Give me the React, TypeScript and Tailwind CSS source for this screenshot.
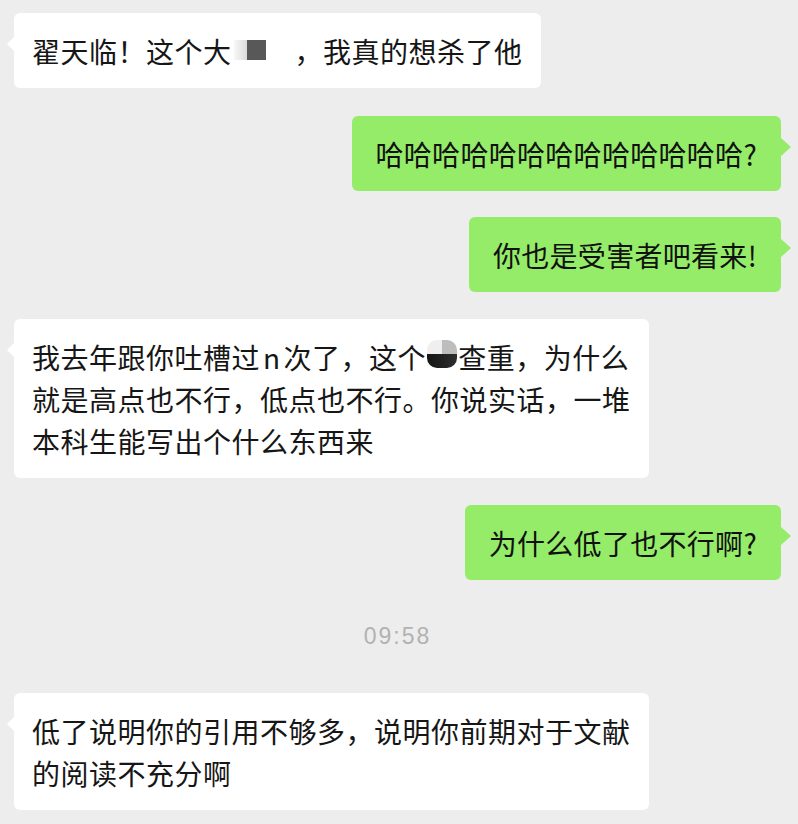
import React from "react";

function LeftBubble({ children }: { children: React.ReactNode }) {
  return (
    <div className="flex justify-start">
      <div className="relative max-w-[660px] rounded-[6px] bg-white px-[18px] py-[16.5px]">
        {/* tail */}
        <span className="absolute -left-[7px] top-[24px] h-0 w-0 border-y-[7px] border-r-[7px] border-y-transparent border-r-white" />
        <p className="text-[28px] leading-[42px] tracking-[0.5px] text-[#161616]">{children}</p>
      </div>
    </div>
  );
}

function RightBubble({ children }: { children: React.ReactNode }) {
  return (
    <div className="flex justify-end">
      <div className="relative max-w-[660px] rounded-[6px] bg-[#95ec69] px-[24px] py-[16.5px]">
        <span className="absolute -right-[10px] top-[22px] h-0 w-0 border-y-[9px] border-l-[10px] border-y-transparent border-l-[#95ec69]" />
        <p className="text-[28px] leading-[42px] tracking-[0.3px] text-[#111]">{children}</p>
      </div>
    </div>
  );
}

// mosaic blocks covering the original words
function BlurName() {
  return (
    <span className="inline-block h-[20px] w-[63px] overflow-hidden align-[3px]">
      <span className="flex h-[20px]">
        <span className="ml-[2px] h-[20px] w-[13px] bg-gradient-to-r from-[#f8f8f8] to-[#dadada]" />
        <span className="h-[20px] w-[19px] bg-[#585858]" />
      </span>
    </span>
  );
}

function BlurBlob() {
  return (
    <span className="mx-[1px] inline-block h-[28px] w-[30px] overflow-hidden rounded-[10px] align-[1px]">
      <span className="flex h-[14px]">
        <span className="w-[15px] bg-[#efefef]" />
        <span className="w-[15px] bg-[#bdbdbd]" />
      </span>
      <span className="block h-[14px] bg-gradient-to-r from-[#151515] to-[#2e2e2e]" />
    </span>
  );
}

export default function App() {
  return (
    <div
      className="min-h-[824px] w-full bg-[#ededed] pl-[14px] pr-[17px] pt-[13px] pb-[14px]"
      style={{ fontFamily: '"Noto Sans CJK SC", "Noto Sans", sans-serif' }}
    >
      <LeftBubble>
        翟天临！这个大
        <BlurName />
        ，我真的想杀了他
      </LeftBubble>

      <div className="mt-[28px]">
        <RightBubble>哈哈哈哈哈哈哈哈哈哈哈哈哈?</RightBubble>
      </div>

      <div className="mt-[26px]">
        <RightBubble>你也是受害者吧看来!</RightBubble>
      </div>

      <div className="mt-[27px]">
        <LeftBubble>
          我去年跟你吐槽过<span className="mx-[3px]">n</span>次了，这个
          <BlurBlob />
          查重，为什么
          <br />
          就是高点也不行，低点也不行。你说实话，一堆
          <br />
          本科生能写出个什么东西来
        </LeftBubble>
      </div>

      <div className="mt-[27px]">
        <RightBubble>为什么低了也不行啊?</RightBubble>
      </div>

      <div
        className="mt-[41px] mb-[42px] text-center text-[23px] leading-[30px] tracking-[2px] text-[#b2b2b2]"
        style={{ fontFamily: '"Liberation Sans", Arial, sans-serif' }}
      >
        09:58
      </div>

      <LeftBubble>
        低了说明你的引用不够多，说明你前期对于文献
        <br />
        的阅读不充分啊
      </LeftBubble>
    </div>
  );
}
